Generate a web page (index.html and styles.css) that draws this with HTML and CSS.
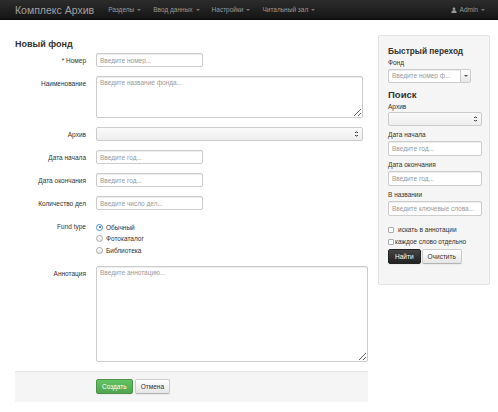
FILE: index.html
```html
<!DOCTYPE html>
<html lang="ru">
<head>
    <meta charset="UTF-8">
    <title>Комплекс Архив</title>
    <link rel="stylesheet" href="styles.css">
</head>
<body>
    <div class="navbar">
        <a class="brand" href="#">Комплекс Архив</a>
        <ul class="nav">
            <li><a href="#">Разделы <b class="caret"></b></a></li>
            <li><a href="#">Ввод данных <b class="caret"></b></a></li>
            <li><a href="#">Настройки <b class="caret"></b></a></li>
            <li><a href="#">Читальный зал <b class="caret"></b></a></li>
        </ul>
        <ul class="nav nav-right">
            <li><a href="#">
                <svg class="icon-user" viewBox="0 0 10 10" width="6" height="6"><circle cx="5" cy="3" r="2.3" fill="#999"/><path d="M0.5 10 C0.8 6.2 2.6 5.4 5 5.4 C7.4 5.4 9.2 6.2 9.5 10 Z" fill="#999"/></svg>
                Admin <b class="caret"></b></a></li>
        </ul>
    </div>

    <div class="container">
        <div class="main">
            <h2>Новый фонд</h2>
            <form class="form-horizontal">
                <div class="control-group">
                    <label>* Номер</label>
                    <input type="text" class="input-medium" placeholder="Введите номер...">
                </div>
                <div class="control-group">
                    <label>Наименование</label>
                    <textarea class="input-wide" rows="3" placeholder="Введите название фонда..."></textarea>
                </div>
                <div class="control-group">
                    <label>Архив</label>
                    <div class="select input-wide"><span class="arrows"></span></div>
                </div>
                <div class="control-group">
                    <label>Дата начала</label>
                    <input type="text" class="input-medium" placeholder="Введите год...">
                </div>
                <div class="control-group">
                    <label>Дата окончания</label>
                    <input type="text" class="input-medium" placeholder="Введите год...">
                </div>
                <div class="control-group">
                    <label>Количество дел</label>
                    <input type="text" class="input-medium" placeholder="Введите число дел...">
                </div>
                <div class="control-group radio-group">
                    <label>Fund type</label>
                    <div class="radios">
                        <div class="radio"><span class="dot checked"></span>Обычный</div>
                        <div class="radio"><span class="dot"></span>Фотокаталог</div>
                        <div class="radio"><span class="dot"></span>Библиотека</div>
                    </div>
                </div>
                <div class="control-group">
                    <label>Аннотация</label>
                    <textarea class="input-wide tall" placeholder="Введите аннотацию..."></textarea>
                </div>
                <div class="form-actions">
                    <button type="button" class="btn btn-success">Создать</button>
                    <button type="button" class="btn">Отмена</button>
                </div>
            </form>
        </div>

        <div class="sidebar">
            <div class="well">
                <h4>Быстрый переход</h4>
                <label class="first">Фонд</label>
                <div class="combo">
                    <input type="text" placeholder="Введите номер ф...">
                    <span class="combo-btn"><b class="caret dark"></b></span>
                </div>
                <h4 class="search">Поиск</h4>
                <label class="first">Архив</label>
                <div class="select full"><span class="arrows"></span></div>
                <label>Дата начала</label>
                <input type="text" class="full" placeholder="Введите год...">
                <label>Дата окончания</label>
                <input type="text" class="full" placeholder="Введите год...">
                <label>В названии</label>
                <input type="text" class="full" placeholder="Введите ключевые слова...">
                <div class="check"><span class="box"></span>искать в аннотации</div>
                <div class="check tight"><span class="box"></span>каждое слово отдельно</div>
                <div class="buttons">
                    <button type="button" class="btn btn-inverse">Найти</button>
                    <button type="button" class="btn">Очистить</button>
                </div>
            </div>
        </div>
    </div>
</body>
</html>
```

FILE: styles.css
```css
body {
    margin: 0;
    font-family: 'Liberation Sans', Arial, sans-serif;
    font-size: 6.5px;
    color: #333;
    background: #fff;
}

.navbar {
    height: 19px;
    display: flex;
    align-items: center;
    background: linear-gradient(#2c2c2c, #151515);
    border-bottom: 1px solid #0a0a0a;
    padding: 0 0 0 15px;
}

.brand {
    color: #a0a0a0;
    font-size: 10.5px;
    text-decoration: none;
    margin-right: 14px;
}

.nav {
    list-style: none;
    margin: 0;
    padding: 0;
    display: flex;
}

.nav a {
    color: #999;
    text-decoration: none;
    font-size: 6.5px;
    margin-right: 12px;
    display: flex;
    align-items: center;
}

.nav-right {
    margin-left: auto;
}

.nav-right a {
    margin-right: 13px;
}

.icon-user {
    margin-right: 3px;
}

.caret {
    display: inline-block;
    width: 0;
    height: 0;
    margin-left: 3px;
    border-top: 2px solid #777;
    border-left: 2px solid transparent;
    border-right: 2px solid transparent;
}

.caret.dark {
    border-top-color: #555;
    margin: 0;
}

.container {
    display: flex;
    padding: 0 8px 0 15px;
    gap: 10px;
}

.main {
    width: 353px;
}

h2 {
    font-size: 9px;
    font-weight: bold;
    color: #333;
    margin: 19px 0 4px;
}

.control-group {
    display: flex;
    margin-bottom: 9px;
}

.control-group label {
    width: 71px;
    text-align: right;
    padding-top: 4px;
    margin-right: 10px;
    flex-shrink: 0;
}

.radio-group {
    margin-bottom: 10px;
}

input, textarea, .select {
    box-sizing: border-box;
    height: 14px;
    border: 1px solid #ccc;
    border-radius: 2px;
    background: #fff;
    font-family: inherit;
    font-size: 6.5px;
    padding: 2px 3px;
    margin: 0;
    box-shadow: inset 0 1px 1px rgba(0, 0, 0, 0.075);
}

::placeholder {
    color: #999;
}

.input-medium {
    width: 107px;
}

.input-wide {
    width: 267px;
}

textarea {
    height: 42px;
    resize: vertical;
}

textarea.tall {
    width: 272px;
    height: 96px;
}

.select {
    background: linear-gradient(#fafafa, #eee);
    position: relative;
    box-shadow: none;
}

.arrows {
    position: absolute;
    right: 4px;
    top: 3px;
    width: 3px;
    height: 6px;
    background:
        linear-gradient(to bottom right, transparent 50%, #444 50%) 0 0 / 1.5px 2px no-repeat,
        linear-gradient(to bottom left, transparent 50%, #444 50%) 1.5px 0 / 1.5px 2px no-repeat,
        linear-gradient(to top right, transparent 50%, #444 50%) 0 4px / 1.5px 2px no-repeat,
        linear-gradient(to top left, transparent 50%, #444 50%) 1.5px 4px / 1.5px 2px no-repeat;
}

.radios {
    padding-top: 2.5px;
}

.radio {
    display: flex;
    align-items: center;
    height: 11.5px;
}

.dot {
    box-sizing: border-box;
    width: 7px;
    height: 7px;
    border-radius: 50%;
    border: 1px solid #aaa;
    background: linear-gradient(#fff, #e6e6e6);
    margin-right: 3px;
    position: relative;
}

.dot.checked {
    border-color: #4a8fd6;
    background: #fff;
}

.dot.checked::after {
    content: "";
    position: absolute;
    left: 1.5px;
    top: 1.5px;
    width: 2px;
    height: 2px;
    border-radius: 50%;
    background: #1e5fae;
}

.form-actions {
    background: #f5f5f5;
    border-top: 1px solid #e5e5e5;
    margin-top: 9px;
    padding: 7px 0 8px 81px;
    display: flex;
    gap: 2px;
}

.btn {
    font-family: inherit;
    font-size: 6.5px;
    height: 15px;
    padding: 0 5px;
    border: 1px solid #ccc;
    border-bottom-color: #b3b3b3;
    border-radius: 2px;
    background: linear-gradient(#fff, #e6e6e6);
    color: #333;
    box-shadow: 0 1px 1px rgba(0, 0, 0, 0.05);
}

.btn-success {
    color: #fff;
    background: linear-gradient(#62c462, #51a351);
    border-color: #4a944a;
}

.btn-inverse {
    color: #fff;
    background: linear-gradient(#444, #222);
    border-color: #222;
    padding: 0 6px;
}

.sidebar {
    width: 112px;
}

.well {
    margin-top: 15px;
    background: #f5f5f5;
    border: 1px solid #e3e3e3;
    border-radius: 2px;
    padding: 8px 9px 20px;
}

.well h4 {
    font-size: 8.3px;
    font-weight: bold;
    margin: 2px 0 2px;
    color: #333;
}

.well h4.search {
    margin-top: 6px;
    font-size: 9.5px;
}

.well label {
    display: block;
    line-height: 7px;
    margin: 4.5px 0 3.5px;
}

.well label.first {
    margin: 3px 0 2.5px;
}

.combo {
    display: flex;
    width: 83px;
}

.combo input {
    flex: 1;
    width: 0;
    border-radius: 2px 0 0 2px;
}

.combo-btn {
    width: 10px;
    height: 14px;
    box-sizing: border-box;
    border: 1px solid #ccc;
    border-left: 0;
    border-radius: 0 2px 2px 0;
    background: linear-gradient(#fff, #e6e6e6);
    display: flex;
    align-items: center;
    justify-content: center;
}

.full {
    width: 94px;
    height: 15px;
    display: block;
}

.well .select.full {
    height: 14px;
}

.check {
    display: flex;
    align-items: center;
    margin-top: 9.5px;
    height: 8px;
}

.check.tight {
    margin-top: 4px;
}

.box {
    box-sizing: border-box;
    width: 6px;
    height: 6px;
    border: 1px solid #aaa;
    border-radius: 1px;
    background: #fff;
    margin-right: 4px;
}

.check.tight .box {
    margin-right: 1px;
}

.buttons {
    margin-top: 3px;
    display: flex;
    gap: 1px;
}
```
